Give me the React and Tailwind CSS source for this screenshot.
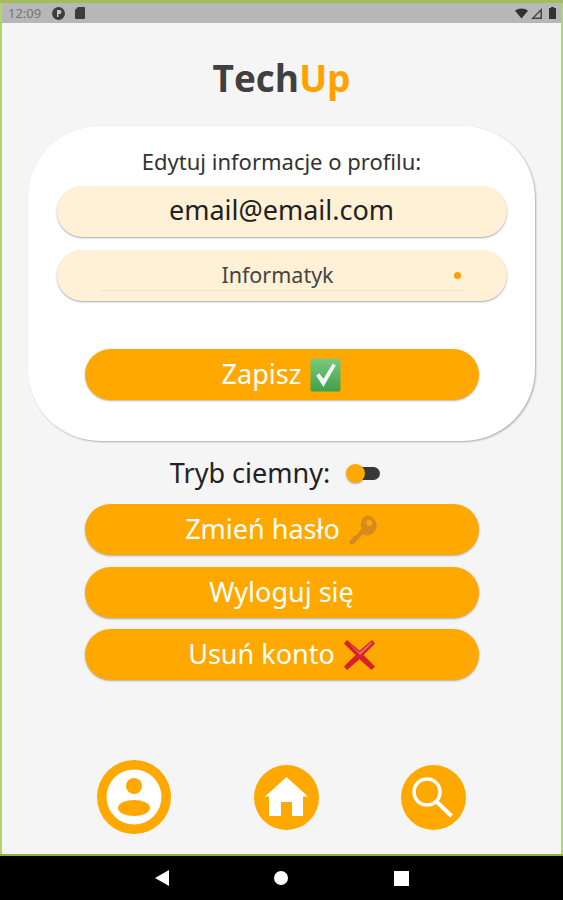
const font = { fontFamily: '"Noto Sans", sans-serif' };

function CheckEmoji() {
  return (
    <svg width="31" height="34" viewBox="0 0 30 31" preserveAspectRatio="none" className="shrink-0">
      <defs>
        <linearGradient id="chk" x1="0" y1="0" x2="0" y2="1">
          <stop offset="0" stopColor="#7cc97f" />
          <stop offset="1" stopColor="#3fa04a" />
        </linearGradient>
      </defs>
      <rect x="0.5" y="0.5" width="29" height="30" rx="1.5" fill="url(#chk)" />
      <path d="M6 16l3-2 4 5 9-14 3 1.5-12 20z" fill="#f1f5f1" />
    </svg>
  );
}

function KeyEmoji() {
  return (
    <svg width="30" height="30" viewBox="1 2 26 28.500" className="shrink-0 -ml-[1px]">
      <path d="M17.5 2.5a9.5 9.5 0 0 1 9.5 9.5 9.5 9.5 0 0 1-13.5 8.6L5 30H1.500v-4.500l2.500-.500.5-3 3-.5 5-6.500A9.500 9.500 0 0 1 17.500 2.500z" fill="#d98a1f" />
      <circle cx="20" cy="9.500" r="2.800" fill="#ffa900" />
    </svg>
  );
}

function CrossEmoji() {
  return (
    <svg width="31" height="30" viewBox="1 1 31 31" preserveAspectRatio="none" className="shrink-0">
      <path d="M4 1l12.500 11L29 1l3 3.500L20.500 16.500 32 28.500 28.500 32 16.500 21 4 32 1 28.500 12.500 16.500 1 4.500z" fill="#d8202a" />
      <path d="M4.500 3l12 11L28.500 3l1 1-12.500 12.500" fill="#ef6a6c" />
    </svg>
  );
}

function OrangeButton({ children }) {
  return (
    <button className="w-[394px] h-[51px] rounded-full bg-[#ffa900] text-white text-[27px] flex items-center justify-center gap-[9px] shadow-[0_1px_2px_rgba(0,0,0,0.3)]">
      {children}
    </button>
  );
}

function StatusBar() {
  return (
    <div className="h-[20px] bg-[#b7b7b7] flex items-center justify-between pl-[6px] pr-[5px] shrink-0">
      <div className="flex items-center gap-[11px]">
        <span className="text-[13px] text-[#757575] leading-none">12:09</span>
        <div className="flex items-center gap-[10px]">
          <svg width="13" height="13" viewBox="0 0 13 13">
            <circle cx="6.500" cy="6.500" r="6.500" fill="#3d3d3d" />
            <path d="M5 3h2.500a2 2 0 0 1 0 4H6.500v3H5z" fill="#c4c4c4" />
          </svg>
          <svg width="10" height="12" viewBox="0 0 10 12">
            <path d="M3 0h6a1 1 0 0 1 1 1v10a1 1 0 0 1-1 1H1a1 1 0 0 1-1-1V3z" fill="#3d3d3d" />
          </svg>
        </div>
      </div>
      <div className="flex items-center">
        <svg width="13" height="11" viewBox="0 0 14 11">
          <path d="M0 2.500C4-.8 10-.8 14 2.500L7 11z" fill="#333" />
        </svg>
        <svg width="11" height="11" viewBox="0 0 11 11" className="ml-[3px]">
          <path d="M11 0v11H0z" fill="#444" />
          <path d="M9.500 3.500v6H3.500z" fill="#b7b7b7" />
        </svg>
        <svg width="7" height="12" viewBox="0 0 7 12" className="ml-[7px]">
          <path d="M2 0h3v1h1.500a.5.5 0 0 1 .5.500V12H0V1.500A.5.5 0 0 1 .5 1H2z" fill="#333" />
        </svg>
      </div>
    </div>
  );
}

function ProfileIcon() {
  return (
    <svg width="74" height="74" viewBox="0 0 74 74">
      <circle cx="37" cy="37" r="37" fill="#ffa900" />
      <circle cx="37" cy="37" r="27.500" fill="#fff" />
      <circle cx="37" cy="26" r="8" fill="#ffa900" />
      <ellipse cx="37" cy="48" rx="16" ry="8" fill="#ffa900" />
    </svg>
  );
}

function HomeIcon() {
  return (
    <svg width="65" height="65" viewBox="0 0 65 65">
      <circle cx="32.500" cy="32.500" r="32.500" fill="#ffa900" />
      <path d="M32.500 12L54 31.500H49V51H38V37H27V51H15V31.500H11z" fill="#fff" />
    </svg>
  );
}

function SearchIcon() {
  return (
    <svg width="65" height="65" viewBox="0 0 65 65">
      <circle cx="32.500" cy="32.500" r="32.500" fill="#ffa900" />
      <circle cx="26" cy="27" r="13" fill="none" stroke="#fff" strokeWidth="3.500" />
      <path d="M36 37l14.500 14" stroke="#fff" strokeWidth="4" />
    </svg>
  );
}

export default function App() {
  return (
    <div className="w-[563px] h-[900px] flex flex-col bg-black overflow-hidden" style={font}>
      <div className="h-[856px] bg-[#b1d566] border-t-[3px] border-t-[#a3bd58] border-b-[2px] border-b-[#8cb43c] px-[2px] flex flex-col">
        <StatusBar />
        <div className="flex-1 bg-[#f5f5f5] flex flex-col items-center">
          <h1 className="mt-[33px] h-[44px] text-[37px] leading-[44px] font-bold text-[#404040]" style={{ fontFamily: '"Open Sans", sans-serif' }}>
            Tech<span className="text-[#ffa200]">Up</span>
          </h1>

          <div className="mt-[26px] w-[507px] h-[315px] bg-white rounded-[72px] shadow-[1px_1px_2px_rgba(0,0,0,0.3)] flex flex-col items-center pt-[21px]">
            <p className="text-[22px] leading-[29px] text-[#333]">Edytuj informacje o profilu:</p>
            <div className="mt-[10px] w-[450px] h-[51px] pb-[2px] rounded-full bg-[#fff1d6] shadow-[0_1px_2px_rgba(0,0,0,0.35)] flex items-center justify-center text-[27px] text-[#222]">
              email@email.com
            </div>
            <div className="mt-[13px] w-[450px] h-[51px] rounded-full bg-[#fff1d6] shadow-[0_1px_2px_rgba(0,0,0,0.35)] relative flex justify-center">
              <div className="w-[362px] h-[41px] pt-[11px] pr-[8px] border-b border-[#ece2cc] flex items-center justify-center text-[21.500px] text-[#444]">
                Informatyk
              </div>
              <span className="absolute right-[46px] top-[22px] w-[7px] h-[7px] rounded-full bg-[#ffa200]" />
            </div>
            <div className="mt-[48px]">
              <OrangeButton><span>Zapisz</span><CheckEmoji /></OrangeButton>
            </div>
          </div>

          <div className="mt-[17px] mr-[13px] h-[30px] flex items-center">
            <span className="text-[27px] leading-[30px] text-[#222]">Tryb ciemny:</span>
            <div className="ml-[16px] relative w-[34px] h-[20px] flex items-center">
              <div className="absolute left-[8px] right-0 h-[13px] rounded-full bg-[#383838]" />
              <div className="absolute left-0 w-[19px] h-[19px] rounded-full bg-[#ffa900] shadow-[0_1px_2px_rgba(0,0,0,0.3)]" />
            </div>
          </div>

          <div className="mt-[16px] flex flex-col gap-[11.500px]">
            <OrangeButton><span>Zmień hasło</span><KeyEmoji /></OrangeButton>
            <OrangeButton><span>Wyloguj się</span></OrangeButton>
            <OrangeButton><span>Usuń konto</span><CrossEmoji /></OrangeButton>
          </div>

          <div className="mt-[80px] w-full flex items-center">
            <div className="ml-[95px]"><ProfileIcon /></div>
            <div className="ml-[83px]"><HomeIcon /></div>
            <div className="ml-[82px]"><SearchIcon /></div>
          </div>
        </div>
      </div>

      <div className="flex-1 bg-black flex items-center">
        <svg width="14" height="16" viewBox="0 0 14 16" className="ml-[155px]">
          <path d="M14 0v16L0 8z" fill="#fff" />
        </svg>
        <span className="ml-[105px] w-[14px] h-[14px] rounded-full bg-white" />
        <span className="ml-[106px] w-[15px] h-[15px] bg-white" />
      </div>
    </div>
  );
}
